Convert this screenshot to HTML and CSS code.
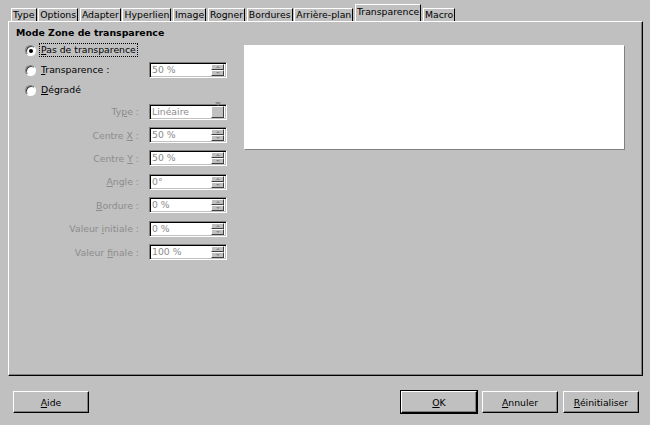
FILE: index.html
```html
<!DOCTYPE html>
<html lang="fr">
  <head>
    <meta charset="UTF-8" />
    <title>Transparence</title>
    <link rel="stylesheet" href="styles.css">
  </head>
  <body>
    <div class="dialog">
      <nav class="tabs">
        <span class="tab">Type</span>
        <span class="tab">Options</span>
        <span class="tab">Adapter</span>
        <span class="tab">Hyperlien</span>
        <span class="tab">Image</span>
        <span class="tab">Rogner</span>
        <span class="tab">Bordures</span>
        <span class="tab">Arrière-plan</span>
        <span class="tab active">Transparence</span>
        <span class="tab">Macro</span>
      </nav>

      <section class="panel">
        <div class="controls">
          <h2 class="titre">Mode Zone de transparence</h2>

          <div class="option">
            <span class="radio checked"></span>
            <span class="label focus"><u>P</u>as de transparence</span>
          </div>
          <div class="option">
            <span class="radio"></span>
            <span class="label"><u>T</u>ransparence :</span>
            <div class="field spin"><span class="valeur">50 %</span><span class="fleches"><i class="haut"></i><i class="bas"></i></span></div>
          </div>
          <div class="option">
            <span class="radio"></span>
            <span class="label"><u>D</u>égradé</span>
          </div>

          <div class="ligne">
            <span class="nom">Ty<u>p</u>e :</span>
            <div class="field combo"><span class="valeur">Linéaire</span><span class="deroule"><i class="bas"></i></span></div>
          </div>
          <div class="ligne">
            <span class="nom">Centre <u>X</u> :</span>
            <div class="field spin"><span class="valeur">50 %</span><span class="fleches"><i class="haut"></i><i class="bas"></i></span></div>
          </div>
          <div class="ligne">
            <span class="nom">Centre <u>Y</u> :</span>
            <div class="field spin"><span class="valeur">50 %</span><span class="fleches"><i class="haut"></i><i class="bas"></i></span></div>
          </div>
          <div class="ligne">
            <span class="nom"><u>A</u>ngle :</span>
            <div class="field spin"><span class="valeur">0°</span><span class="fleches"><i class="haut"></i><i class="bas"></i></span></div>
          </div>
          <div class="ligne">
            <span class="nom"><u>B</u>ordure :</span>
            <div class="field spin"><span class="valeur">0 %</span><span class="fleches"><i class="haut"></i><i class="bas"></i></span></div>
          </div>
          <div class="ligne">
            <span class="nom">Valeur <u>i</u>nitiale :</span>
            <div class="field spin"><span class="valeur">0 %</span><span class="fleches"><i class="haut"></i><i class="bas"></i></span></div>
          </div>
          <div class="ligne">
            <span class="nom">Valeur <u>f</u>inale :</span>
            <div class="field spin"><span class="valeur">100 %</span><span class="fleches"><i class="haut"></i><i class="bas"></i></span></div>
          </div>
        </div>

        <div class="apercu"></div>
      </section>

      <footer class="boutons">
        <button class="bouton"><u>A</u>ide</button>
        <div class="droite">
          <button class="bouton defaut"><u>O</u>K</button>
          <button class="bouton"><u>A</u>nnuler</button>
          <button class="bouton"><u>R</u>éinitialiser</button>
        </div>
      </footer>
    </div>
  </body>
</html>
```

FILE: styles.css
```css
/* ---------GRUNDLAG------------*/
* {
  margin: 0;
  padding: 0;
  box-sizing: border-box;
}

body {
  background-color: #c0c0c0;
  font-family: "DejaVu Sans", sans-serif;
  font-size: 9.3px;
  color: #000;
}

u {
  text-decoration: underline;
  text-underline-offset: 1px;
}

.dialog {
  width: 650px;
  height: 425px;
  overflow: hidden;
}

/* ---------FANER------------*/

.tabs {
  display: flex;
  align-items: flex-end;
  height: 21px;
  padding-left: 11px;
}

.tab {
  height: 13px;
  line-height: 12px;
  padding: 0 1.1px;
  margin-right: 1.6px;
  border-top: 1px solid #fff;
  border-left: 1px solid #fff;
  border-right: 1px solid #000;
  white-space: nowrap;
}

.tab.active {
  height: 17px;
  line-height: 14px;
}

/* ---------PANEL------------*/

.panel {
  display: flex;
  margin-left: 8px;
  width: 635px;
  height: 355px;
  border-top: 1px solid #fff;
  border-left: 1px solid #fff;
  border-right: 1px solid #000;
  border-bottom: 1px solid #000;
  box-shadow: inset -1px -1px 0 #808080;
}

.controls {
  width: 235px;
  padding-top: 4px;
}

.titre {
  font-size: 9.4px;
  font-weight: 700;
  line-height: 14px;
  margin-left: 7px;
}

.option {
  display: flex;
  align-items: center;
  width: 218px;
  height: 20px;
}

.radio {
  position: relative;
  width: 11px;
  height: 11px;
  margin-left: 16px;
  border-radius: 50%;
  background-color: #fff;
  border: 1px solid;
  border-color: #808080 #fff #fff #808080;
  box-shadow: inset 1px 1px 0 #404040;
}

.radio.checked::after {
  content: "";
  position: absolute;
  left: 3px;
  top: 3px;
  width: 4px;
  height: 4px;
  border-radius: 50%;
  background-color: #000;
}

.label {
  margin-left: 4px;
  padding: 0 1px;
  line-height: 12px;
}

.focus {
  outline: 1px dotted #000;
}

.option .field {
  margin-left: auto;
}

.ligne {
  display: flex;
  align-items: center;
  height: 23.4px;
}

.nom {
  width: 130px;
  text-align: right;
  color: #8c8c8c;
}

/* ---------FELTER------------*/

.field {
  display: flex;
  width: 78px;
  height: 16px;
  margin-left: 10px;
  background-color: #fff;
  border: 1px solid;
  border-color: #808080 #fff #fff #808080;
  box-shadow: inset 1px 1px 0 #000, inset -1px -1px 0 #c0c0c0;
  padding: 1px;
}

.valeur {
  flex: 1;
  padding-left: 1px;
  line-height: 12px;
  color: #8c8c8c;
}

.fleches {
  display: flex;
  flex-direction: column;
  width: 13px;
  margin-right: 1px;
}

.fleches i,
.deroule {
  display: flex;
  align-items: center;
  justify-content: center;
  flex: 1;
  background-color: #c0c0c0;
  border-top: 1px solid #fff;
  border-left: 1px solid #fff;
  border-right: 1px solid #404040;
  border-bottom: 1px solid #404040;
}

.deroule {
  flex: none;
  width: 13px;
  margin-right: 1px;
}

.fleches i::after,
.deroule i::after {
  content: "";
  border-left: 2px solid transparent;
  border-right: 2px solid transparent;
}

.fleches .haut::after {
  border-bottom: 2px solid #8c8c8c;
}

.fleches .bas::after {
  border-top: 2px solid #8c8c8c;
}

.deroule i::after {
  border-left-width: 3px;
  border-right-width: 3px;
  border-top: 4px solid #8c8c8c;
}

/* ---------APERCU------------*/

.apercu {
  width: 380px;
  height: 104px;
  margin-top: 23px;
  background-color: #fff;
  box-shadow: 1px 1px 0 #808080;
}

/* ---------KNAPPER------------*/

.boutons {
  display: flex;
  justify-content: space-between;
  margin-top: 15px;
  padding: 0 11px 0 13px;
}

.droite {
  display: flex;
  gap: 5px;
}

.bouton {
  width: 76px;
  height: 22px;
  font-family: "DejaVu Sans", sans-serif;
  font-size: 9.3px;
  color: #000;
  background-color: #c0c0c0;
  border: 1px solid;
  border-color: #fff #000 #000 #fff;
  box-shadow: inset -1px -1px 0 #808080;
}

.bouton.defaut {
  outline: 1px solid #000;
}
```
